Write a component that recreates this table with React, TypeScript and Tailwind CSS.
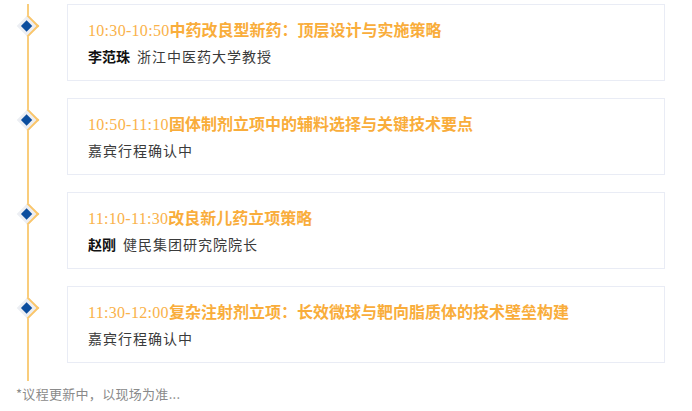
const agenda = [
  {
    time: '10:30-10:50',
    title: '中药改良型新药：顶层设计与实施策略',
    name: '李范珠',
    role: '浙江中医药大学教授',
  },
  {
    time: '10:50-11:10',
    title: '固体制剂立项中的辅料选择与关键技术要点',
    name: '',
    role: '嘉宾行程确认中',
  },
  {
    time: '11:10-11:30',
    title: '改良新儿药立项策略',
    name: '赵刚',
    role: '健民集团研究院院长',
  },
  {
    time: '11:30-12:00',
    title: '复杂注射剂立项：长效微球与靶向脂质体的技术壁垒构建',
    name: '',
    role: '嘉宾行程确认中',
  },
];

export default function App() {
  return (
    <div className="w-[692px] h-[411px] bg-white overflow-hidden font-['Noto_Sans_CJK_SC',sans-serif]">
      <div className="relative pt-[4px]">
        {/* timeline rail */}
        <div className="absolute left-[27px] top-[4px] h-[377px] w-[1.5px] bg-[#f9cd7c]" />

        <div className="flex flex-col gap-[17px]">
          {agenda.map((item) => (
            <div key={item.time} className="flex">
              <div className="relative w-[67px] shrink-0">
                <div className="absolute left-[20px] top-[14px] w-[16px] h-[16px] rotate-45 bg-[#eceef3] border-t-2 border-r-2 border-[#fbc66a] flex items-center justify-center">
                  <div className="w-[8px] h-[8px] bg-[#0b4d9e]" />
                </div>
              </div>
              <div className="w-[598px] h-[77px] border border-[#e9ecf5] bg-white pl-[20px] pt-[11px]">
                <p className="text-[16px] leading-[26px] text-[#f9ad3b] whitespace-nowrap">
                  <span className="font-['Liberation_Serif',serif] tracking-[0.3px] text-[#fab24a]">{item.time}</span>
                  <span className="font-bold">{item.title}</span>
                </p>
                <p className="mt-[1px] text-[14px] leading-[22px] text-[#3a3a3a] whitespace-nowrap">
                  {item.name && <span className="font-bold text-[#111] mr-[7px]">{item.name}</span>}
                  <span className="tracking-[1px]">{item.role}</span>
                </p>
              </div>
            </div>
          ))}
        </div>

        <p className="mt-[21px] pl-[16px] text-[13px] leading-[20px] tracking-[0.3px] text-[#8a8a8a]">*议程更新中，以现场为准...</p>
      </div>
    </div>
  );
}
